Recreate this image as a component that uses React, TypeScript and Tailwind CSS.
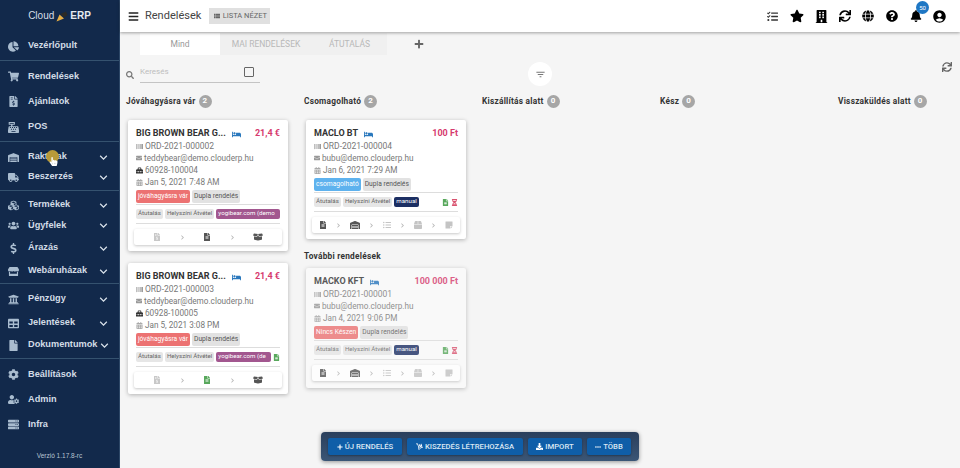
import React from "react";
import {
  FaChartPie, FaShoppingCart, FaFileInvoiceDollar, FaCashRegister, FaWarehouse, FaTruck, FaCubes, FaUsers,
  FaDollarSign, FaStore, FaUniversity, FaTable, FaFile, FaCog, FaUserCog, FaServer, FaTasks, FaStar, FaBuilding,
  FaSync, FaGlobe, FaQuestionCircle, FaBell, FaBars, FaSearch, FaPlus, FaHandPointer, FaBarcode, FaEnvelope,
  FaCalendarAlt, FaFileAlt, FaChevronRight, FaBoxOpen, FaStickyNote, FaListUl, FaHourglassHalf, FaDownload, FaEllipsisH, FaDolly, FaBed, FaBox, FaToolbox,
} from "react-icons/fa";
import { MdAccountCircle, MdFilterList, MdKeyboardArrowDown, MdViewList } from "react-icons/md";

type NavItem = { label: string; icon: React.ReactNode; cls: string; chevron?: boolean };
const ic = "text-[11px]";
const groups: { cls: string; items: NavItem[] }[] = [
  { cls: "h-[30px]", items: [{ label: "Vezérlőpult", icon: <FaChartPie className={ic} />, cls: "h-[30px]" }] },
  {
    cls: "h-[81px] pt-[3px]",
    items: [
      { label: "Rendelések", icon: <FaShoppingCart className={ic} />, cls: "h-[25px]" },
      { label: "Ajánlatok", icon: <FaFileInvoiceDollar className={ic} />, cls: "h-[25px]" },
      { label: "POS", icon: <FaCashRegister className={ic} />, cls: "h-[26px]" },
    ],
  },
  {
    cls: "h-[49px] pt-[5px]",
    items: [
      { label: "Raktárak", icon: <FaWarehouse className={ic} />, cls: "h-[20px]", chevron: true },
      { label: "Beszerzés", icon: <FaTruck className={ic} />, cls: "h-[20px]", chevron: true },
    ],
  },
  {
    cls: "h-[93px] pt-[4px]",
    items: [
      { label: "Termékek", icon: <FaCubes className={ic} />, cls: "h-[20px]", chevron: true },
      { label: "Ügyfelek", icon: <FaUsers className={ic} />, cls: "h-[21px]", chevron: true },
      { label: "Árazás", icon: <FaDollarSign className={ic} />, cls: "h-[24px]", chevron: true },
      { label: "Webáruházak", icon: <FaStore className={ic} />, cls: "h-[22px]", chevron: true },
    ],
  },
  {
    cls: "h-[75px] pt-[3px]",
    items: [
      { label: "Pénzügy", icon: <FaUniversity className={ic} />, cls: "h-[24px]", chevron: true },
      { label: "Jelentések", icon: <FaTable className={ic} />, cls: "h-[24px]", chevron: true },
      { label: "Dokumentumok", icon: <FaFile className={ic} />, cls: "h-[20px]", chevron: true },
    ],
  },
];
const lastGroup: NavItem[] = [
  { label: "Beállítások", icon: <FaCog className={ic} />, cls: "h-[25px]" },
  { label: "Admin", icon: <FaUserCog className={ic} />, cls: "h-[25px]" },
  { label: "Infra", icon: <FaServer className={ic} />, cls: "h-[25px]" },
];

function Nav({ item }: { item: NavItem }) {
  return (
    <div className={`flex items-center pl-[8px] pr-[8px] ${item.cls}`}>
      <span className="w-[20px] shrink-0 flex justify-start text-[#a9bccf]">{item.icon}</span>
      <span className="flex-1 text-[9.2px] font-bold text-[#d3dce6] whitespace-nowrap">{item.label}</span>
      {item.chevron && <MdKeyboardArrowDown className="shrink-0 text-[15px] text-[#d9e1ea]" />}
    </div>
  );
}

function Sidebar() {
  return (
    <aside className="relative w-[120px] shrink-0 h-full bg-[#12294b] border-r border-[#2c4666] font-['Liberation_Sans',sans-serif]">
      <div className="h-[31px] flex items-center justify-center gap-[2px] text-[10px] text-[#d5dde6]">
        <span>Cloud</span>
        <svg width="12" height="12" viewBox="0 0 12 12">
          <path d="M0.5 11.5 L3.5 4.5 L8 8.5 Z" fill="#e6ae45" />
          <path d="M4.5 4 L10 1.5 L11.5 5 L8 7.5 Z" fill="#2b2a26" />
        </svg>
        <span className="font-bold text-[#e6ebf1]">ERP</span>
      </div>
      {groups.map((g) => (
        <div key={g.items[0].label} className={`border-b border-[#35526f] ${g.cls}`}>
          {g.items.map((i) => (
            <Nav key={i.label} item={i} />
          ))}
        </div>
      ))}
      <div className="pt-[3px]">
        {lastGroup.map((i) => (
          <Nav key={i.label} item={i} />
        ))}
      </div>
      <div className="mt-[14px] text-center text-[6.5px] text-[#b9c5d2]">Verzió 1.17.8-rc</div>
      <span className="absolute left-[46px] top-[150px] w-[13px] h-[13px] rounded-full bg-[#b89a3a]" />
      <FaHandPointer className="absolute left-[49px] top-[157px] text-[9px] text-white" />
    </aside>
  );
}

function TopBar() {
  const icons = "text-black";
  return (
    <header className="h-[32px] shrink-0 bg-white shadow-[0_1px_3px_rgba(0,0,0,0.35)] flex items-center pl-[8px] relative z-10 font-['Roboto',sans-serif]">
      <FaBars className="text-[11px] text-[#222]" />
      <span className="ml-[6px] text-[11px] text-[#444]">Rendelések</span>
      <div className="ml-[8px] w-[61px] h-[16px] bg-[#e0e0e0] flex items-center justify-center gap-[2px] text-[7.5px] text-[#666]">
        <MdViewList className="text-[8px]" />
        LISTA NÉZET
      </div>
      <div className="ml-auto flex items-center pr-[9px]">
        <div className="w-[26px] flex justify-center"><FaTasks className={`text-[11px] text-[#333]`} /></div>
        <div className="w-[24px] flex justify-center"><FaStar className={`text-[14px] ${icons}`} /></div>
        <div className="w-[24px] flex justify-center"><FaBuilding className={`text-[13px] ${icons}`} /></div>
        <div className="w-[23px] flex justify-center"><FaSync className={`text-[12px] ${icons}`} /></div>
        <div className="w-[24px] flex justify-center"><FaGlobe className={`text-[12px] ${icons}`} /></div>
        <div className="w-[24px] flex justify-center"><FaQuestionCircle className={`text-[12px] ${icons}`} /></div>
        <div className="w-[23px] flex justify-center relative">
          <FaBell className={`text-[12px] ${icons}`} />
          <span className="absolute -top-[9px] left-[12px] w-[13px] h-[13px] rounded-full bg-[#1f77c4] text-white text-[6px] flex items-center justify-center">50</span>
        </div>
        <div className="w-[24px] flex justify-center"><MdAccountCircle className={`text-[15px] ${icons}`} /></div>
      </div>
    </header>
  );
}

function Chip({ cls, children }: { cls: string; children: React.ReactNode }) {
  return <span className={`inline-flex items-center rounded-[2px] whitespace-nowrap overflow-hidden ${cls}`}>{children}</span>;
}

const Chev = () => <FaChevronRight className="text-[5px] text-[#b5b5b5]" />;

function Card({
  title, price, ord, email, phone, date, status, statusCls, third, thirdCls, extra, steps, stepsCls, faded, height,
}: {
  title: string; price: string; ord: string; email: string; phone?: string; date: string;
  status: string; statusCls: string; third: string; thirdCls: string; extra?: React.ReactNode; steps: React.ReactNode; stepsCls: string; faded?: boolean; height: string;
}) {
  return (
    <div className={`${height} w-[160px] rounded-[2px] shadow-[0_1px_4px_rgba(0,0,0,0.28)] px-[8px] pt-[8px] flex flex-col ${faded ? "bg-[#fafafa] opacity-80" : "bg-white"}`}>
      <div className="flex items-center h-[12px] text-[9px] font-bold">
        <span className="text-[#333] whitespace-nowrap">{title}</span>
        <FaBed className="ml-[6px] text-[9px] text-[#2a78bd]" />
        <span className="ml-auto text-[#d63a6e]">{price}</span>
      </div>
      <div className="text-[8.2px] leading-[12px] text-[#777]">
        <div className="flex items-center gap-[2px] text-[8.5px]"><FaBarcode className="text-[7px] text-[#777]" />{ord}</div>
        <div className="flex items-center gap-[2px]"><FaEnvelope className="text-[6px] text-[#999]" />{email}</div>
        {phone && <div className="flex items-center gap-[2px]"><FaToolbox className="text-[7px] text-[#333]" />{phone}</div>}
        <div className="flex items-center gap-[2px]"><FaCalendarAlt className="text-[7px] text-[#aaa]" />{date}</div>
      </div>
      <div className="mt-[2px] flex gap-[2px] h-[13px] text-[6.7px]">
        <Chip cls={`px-[2px] text-white ${statusCls}`}>{status}</Chip>
        <Chip cls="px-[2px] bg-[#e2e2e2] text-[#555]">Dupla rendelés</Chip>
      </div>
      <div className="mt-[1px] h-[1px] bg-[#ddd]" />
      <div className="mt-[4px] flex items-center gap-[2px] h-[10px] text-[6.2px] text-[#666]">
        <Chip cls="h-[10px] px-[2px] bg-[#e6e6e6]">Átutalás</Chip>
        <Chip cls="h-[10px] px-[2px] bg-[#e6e6e6]">Helyszíni Átvétel</Chip>
        <Chip cls={`h-[10px] px-[2px] text-white ${thirdCls}`}>{third}</Chip>
        {extra}
      </div>
      <div className="mt-[4px] h-[1px] bg-[#ddd]" />
      <div className={`mt-[5px] -mx-[2px] h-[16px] rounded-[2px] bg-white shadow-[0_1px_3px_rgba(0,0,0,0.22)] flex items-center justify-between ${stepsCls}`}>
        {steps}
      </div>
    </div>
  );
}

const stepsA = (g?: boolean) => (
  <>
    <FaFileInvoiceDollar className="text-[8px] text-[#c8c8c8]" />
    <Chev />
    <FaFileAlt className={`text-[8px] ${g ? "text-[#58a85c]" : "text-[#555]"}`} />
    <Chev />
    <FaBoxOpen className="text-[10px] text-[#555]" />
  </>
);
const stepsB = (
  <>
    <FaFileAlt className="text-[8px] text-[#555]" />
    <Chev />
    <FaWarehouse className="text-[10px] text-[#555]" />
    <Chev />
    <FaListUl className="text-[8px] text-[#c4c4c4]" />
    <Chev />
    <FaBox className="text-[8px] text-[#c4c4c4]" />
    <Chev />
    <FaStickyNote className="text-[8px] text-[#c4c4c4]" />
  </>
);
const statusIcons = (
  <span className="ml-auto flex items-center gap-[2px]">
    <FaFileAlt className="text-[7px] text-[#58a85c]" />
    <FaHourglassHalf className="text-[7px] text-[#d9536f]" />
  </span>
);

function ColHead({ title, n }: { title: string; n: number }) {
  return (
    <div className="-ml-[2px] flex items-center gap-[3px] h-[14px] text-[8.3px] font-bold tracking-[0.25px] text-[#333] whitespace-nowrap">
      {title}
      <span className="w-[13px] h-[13px] rounded-full bg-[#a6a6a6] text-white text-[8px] flex items-center justify-center">{n}</span>
    </div>
  );
}

function Board() {
  return (
    <div className="flex pl-[8px]">
      <div className="w-[178px]">
        <ColHead title="Jóváhagyásra vár" n={2} />
        <div className="mt-[12px] flex flex-col gap-[12px]">
          <Card height="h-[131px]" title="BIG BROWN BEAR G..." price="21,4 €" ord="ORD-2021-000002" email="teddybear@demo.clouderp.hu" phone="60928-100004" date="Jan 5, 2021 7:48 AM"
            status="jóváhagyásra vár" statusCls="bg-[#ec7272]" third="yogibear.com (demo" thirdCls="bg-[#a2578f] flex-1" steps={stepsA()} stepsCls="px-[19px]" />
          <Card height="h-[131px]" title="BIG BROWN BEAR G..." price="21,4 €" ord="ORD-2021-000003" email="teddybear@demo.clouderp.hu" phone="60928-100005" date="Jan 5, 2021 3:08 PM"
            status="jóváhagyásra vár" statusCls="bg-[#ec7272]" third="yogibear.com (de" thirdCls="bg-[#a2578f] flex-1"
            extra={<FaFileAlt className="text-[7px] text-[#58a85c]" />} steps={stepsA(true)} stepsCls="px-[19px]" />
        </div>
      </div>
      <div className="w-[178px]">
        <ColHead title="Csomagolható" n={2} />
        <div className="mt-[12px]">
          <Card height="h-[119px]" title="MACLO BT" price="100 Ft" ord="ORD-2021-000004" email="bubu@demo.clouderp.hu" date="Jan 6, 2021 7:29 AM"
            status="csomagolható" statusCls="bg-[#5eb2ee]" third="manual" thirdCls="bg-[#1c2f63]" extra={statusIcons} steps={stepsB} stepsCls="px-[7px]" />
        </div>
        <div className="-ml-[2px] mt-[11px] h-[12px] text-[8.3px] leading-[12px] font-bold tracking-[0.25px] text-[#333]">További rendelések</div>
        <div className="mt-[6px]">
          <Card faded height="h-[120px]" title="MACKO KFT" price="100 000 Ft" ord="ORD-2021-000001" email="bubu@demo.clouderp.hu" date="Jan 4, 2021 9:06 PM"
            status="Nincs Készen" statusCls="bg-[#ec7272]" third="manual" thirdCls="bg-[#1c2f63]" extra={statusIcons} steps={stepsB} stepsCls="px-[7px]" />
        </div>
      </div>
      <div className="w-[178px]"><ColHead title="Kiszállítás alatt" n={0} /></div>
      <div className="w-[178px]"><ColHead title="Kész" n={0} /></div>
      <div className="w-[120px]"><ColHead title="Visszaküldés alatt" n={0} /></div>
    </div>
  );
}

function ActionBar() {
  const btn = "h-[17px] rounded-[2px] bg-[#0f5ea8] shadow-[0_1px_2px_rgba(0,0,0,0.3)] flex items-center justify-center gap-[2px] text-[7.7px] text-[#dce8f3] font-medium whitespace-nowrap";
  return (
    <div className="absolute left-[201px] top-[432px] w-[318px] h-[29px] rounded-[4px] bg-gradient-to-b from-[#2a3f5c] to-[#3b5676] shadow-[0_1px_4px_rgba(0,0,0,0.4)] flex items-center pl-[7px] gap-[5px] z-20">
      <div className={`${btn} w-[74px]`}><FaPlus className="text-[6px] text-white" />ÚJ RENDELÉS</div>
      <div className={`${btn} w-[116px]`}><FaDolly className="text-[7px] text-white" />KISZEDÉS LÉTREHOZÁSA</div>
      <div className={`${btn} w-[54px]`}><FaDownload className="text-[7px] text-white" />IMPORT</div>
      <div className={`${btn} w-[44px]`}><FaEllipsisH className="text-[6px] text-white" />TÖBB</div>
    </div>
  );
}

export default function App() {
  return (
    <div className="w-[960px] h-[468px] flex overflow-hidden bg-[#f5f5f5] font-['Roboto',sans-serif]">
      <Sidebar />
      <div className="flex-1 flex flex-col relative min-w-0">
        <TopBar />
        <div className="flex pl-[20px] h-[24px] items-center">
          <div className="flex h-[22px] bg-[#f0f0f0] text-[8.5px] text-[#b8b8b8]">
            <div className="w-[80px] bg-white flex items-center justify-center text-[#999]">Mind</div>
            <div className="w-[92px] flex items-center justify-center">MAI RENDELÉSEK</div>
            <div className="w-[75px] flex items-center justify-center">ÁTUTALÁS</div>
          </div>
          <FaPlus className="ml-[27px] text-[10px] text-[#666]" />
        </div>
        <div className="flex h-[38px] items-center pl-[6px] relative">
          <FaSearch className="text-[8px] text-[#777]" />
          <div className="ml-[6px] w-[120px] h-[17px] mt-[-1px] border-b border-[#c4c4c4] flex items-center justify-between pr-[6px] text-[8px] text-[#bdbdbd]">
            <span className="mb-[4px]">Keresés</span>
            <span className="w-[10px] h-[10px] mb-[5px] border border-[#666] rounded-[1px]" />
          </div>
          <div className="ml-[268px] mt-[-2px] w-[24px] h-[24px] rounded-full bg-white flex items-center justify-center">
            <MdFilterList className="text-[11px] text-[#777]" />
          </div>
          <FaSync className="absolute left-[822px] top-[6px] text-[10px] text-[#666]" />
        </div>
        <Board />
        <ActionBar />
      </div>
    </div>
  );
}
